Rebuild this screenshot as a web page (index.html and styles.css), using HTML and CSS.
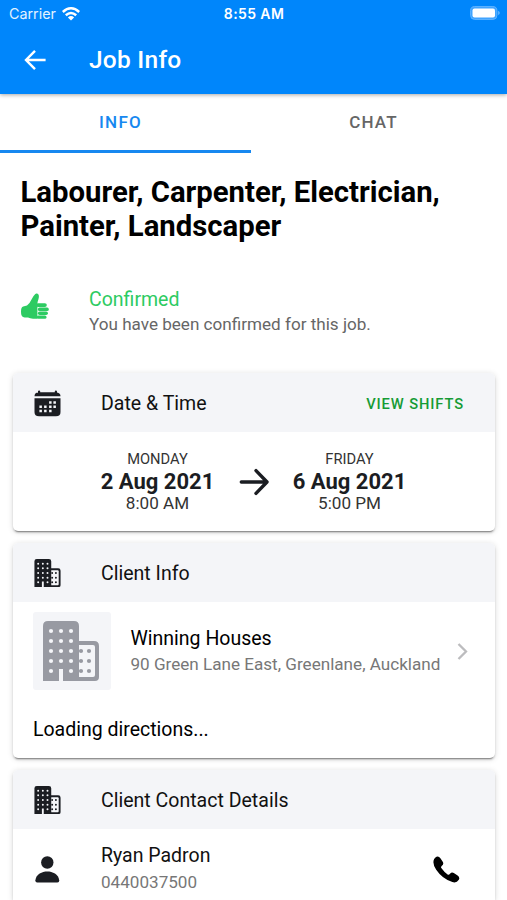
FILE: index.html
```html
<!DOCTYPE html>
<html lang="en">
<head>
<meta charset="utf-8">
<title>Job Info</title>
<link rel="stylesheet" href="styles.css">
</head>
<body>
<svg class="defs" aria-hidden="true">
  <defs>
    <symbol id="buildings" viewBox="0 0 56 60">
      <path fill="currentColor" d="M5 0H31Q36 0 36 5V20H51Q56 20 56 25V56Q56 60 52 60H20V48H16V60H0V5Q0 0 5 0Z"/>
      <path class="bg" d="M36 24H50Q52 24 52 26V54Q52 56 50 56H36Z"/>
      <g class="bg">
        <circle cx="8" cy="10" r="2.1"/><circle cx="18" cy="10" r="2.1"/><circle cx="28" cy="10" r="2.1"/>
        <circle cx="8" cy="20" r="2.1"/><circle cx="18" cy="20" r="2.1"/><circle cx="28" cy="20" r="2.1"/>
        <circle cx="8" cy="30" r="2.1"/><circle cx="18" cy="30" r="2.1"/><circle cx="28" cy="30" r="2.1"/>
        <circle cx="8" cy="40" r="2.1"/><circle cx="18" cy="40" r="2.1"/><circle cx="28" cy="40" r="2.1"/>
        <circle cx="8" cy="50" r="2.1"/><circle cx="28" cy="50" r="2.1"/>
      </g>
      <g fill="currentColor">
        <circle cx="38" cy="30" r="2.1"/><circle cx="46" cy="30" r="2.1"/>
        <circle cx="38" cy="40" r="2.1"/><circle cx="46" cy="40" r="2.1"/>
        <circle cx="38" cy="50" r="2.1"/><circle cx="46" cy="50" r="2.1"/>
      </g>
    </symbol>
  </defs>
</svg>

<header class="top">
  <div class="status">
    <div class="carrier"><span>Carrier</span>
      <svg width="18" height="14" viewBox="0 0 18 14" fill="none" stroke="#fff" stroke-width="2.5"><path d="M.8 5Q9 -2.4 17.2 5M3.8 8.3Q9 3.7 14.2 8.3"/><path d="M9 13.5L5.9 10.4Q9 7.8 12.1 10.4Z" fill="#fff" stroke="none"/></svg>
    </div>
    <div class="clock">8:55 AM</div>
    <svg class="battery" width="31" height="14" viewBox="0 0 31 14"><rect x=".6" y=".6" width="26.3" height="12.8" rx="4" fill="#3ea3ff" stroke="#62b4ff"/><rect x="2.5" y="2.6" width="22.5" height="8.8" rx="2" fill="#fff"/><path d="M28.3 4.8Q31 7 28.3 9.2Z" fill="#83c4ff"/></svg>
  </div>
  <div class="toolbar">
    <svg width="22" height="20" viewBox="0 0 22 20" fill="none" stroke="#fff" stroke-width="2.4"><path d="M11 .9L2 10L11 19.1M2 10H21.6"/></svg>
    <h1>Job Info</h1>
  </div>
</header>

<nav class="tabs">
  <div class="tab active"><span>INFO</span></div>
  <div class="tab"><span>CHAT</span></div>
</nav>

<main>
  <h2 class="title">Labourer, Carpenter, Electrician,<br>Painter, Landscaper</h2>

  <section class="confirm">
    <svg width="28" height="28" viewBox="0 0 28 28" fill="#2dcb62"><path d="M15.8 .6C18.4 1 18.2 4.4 17.3 6.8Q16.6 8.5 16.4 10.2V25.7H12Q9 25.2 7 24.4Q4.5 24.8 2 24Q0 23 0 18.5Q0 13.8 2.2 13.5L6 12.6Q9 10 10.8 6Q12.2 2.8 14.3 .9Q15 .4 15.8 .6Z"/><rect x="15" y="10.2" width="10.8" height="3.8" rx="1.9"/><rect x="16.9" y="14.6" width="10.9" height="3.5" rx="1.7"/><rect x="16.9" y="18.6" width="10" height="3.4" rx="1.7"/><rect x="15.8" y="22.5" width="9.7" height="3.3" rx="1.6"/></svg>
    <div>
      <div class="ok">Confirmed</div>
      <div class="note">You have been confirmed for this job.</div>
    </div>
  </section>

  <section class="card dates">
    <div class="card-head">
      <svg class="icon" width="27" height="27" viewBox="0 0 27 27" fill="#1b1d22"><path d="M4 3.2V1.4Q4 .5 5.1 .5T6.2 1.4V2.3H20.8V1.4Q20.8 .5 21.9 .5T23 1.4V2.5Q26.5 3 26.5 6.3H.5Q.5 2.8 4 2.5Z"/><path d="M.5 8.2H26.5V22Q26.5 26.3 22 26.3H5Q.5 26.3 .5 22Z"/><path class="head-dots" d="M15.1 11.3h2.5v2.5h-2.5zM19.4 11.3h2.5v2.5h-2.5zM5.4 15.5h2.5v2.5H5.4zM10.1 15.5h2.5v2.5h-2.5zM15.1 15.5h2.5v2.5h-2.5zM19.4 15.5h2.5v2.5h-2.5zM5.4 19.8h2.5v2.5H5.4zM10.1 19.8h2.5v2.5h-2.5zM15.1 19.8h2.5v2.5h-2.5z"/></svg>
      <h3>Date &amp; Time</h3>
      <span class="action">VIEW SHIFTS</span>
    </div>
    <div class="range">
      <div class="date"><span class="day">MONDAY</span><strong>2 Aug 2021</strong><span class="time">8:00 AM</span></div>
      <svg width="30" height="28" viewBox="0 0 30 28" fill="none" stroke="#1b1d22" stroke-width="3.4" stroke-linecap="round" stroke-linejoin="round"><path d="M17 2.6L28 14L17 25.4M27 14H2.3"/></svg>
      <div class="date"><span class="day">FRIDAY</span><strong>6 Aug 2021</strong><span class="time">5:00 PM</span></div>
    </div>
  </section>

  <section class="card client">
    <div class="card-head">
      <svg class="icon building" width="27" height="28"><use href="#buildings"/></svg>
      <h3>Client Info</h3>
    </div>
    <div class="client-row">
      <div class="thumb"><svg width="56" height="60"><use href="#buildings"/></svg></div>
      <div class="client-text">
        <div class="name">Winning Houses</div>
        <div class="address">90 Green Lane East, Greenlane, Auckland</div>
      </div>
      <svg class="chevron" width="11" height="17" viewBox="0 0 11 17" fill="none" stroke="#bcbcbe" stroke-width="2.3"><path d="M1.5 1L9 8.5L1.5 16"/></svg>
    </div>
    <p class="loading">Loading directions...</p>
  </section>

  <section class="card contact">
    <div class="card-head">
      <svg class="icon building" width="27" height="28"><use href="#buildings"/></svg>
      <h3>Client Contact Details</h3>
    </div>
    <div class="contact-row">
      <svg width="25" height="27" viewBox="0 0 25 27" fill="#1b1d22"><circle cx="12.3" cy="6.5" r="6.2"/><path d="M2.2 26.4Q.2 26.4 .4 24.2C1.2 18.2 7 15.6 12.3 15.6S23.4 18.2 24.2 24.2Q24.4 26.4 22.4 26.4Z"/></svg>
      <div class="contact-text">
        <div class="person">Ryan Padron</div>
        <div class="phone">0440037500</div>
      </div>
      <svg class="call" width="27" height="27" viewBox="0 0 27 27"><path d="M3.5 .7Q5.7 -.2 7.6 2.4L9.9 6Q11 8.2 8.9 9.7Q7.6 10.7 8.3 12.1Q11 16 14.6 18.4Q15.9 19.1 17 17.8Q18.6 15.8 20.8 17L24.6 19.6Q27.2 21.6 25.8 23.8Q23.6 27.3 19.4 26.1Q9.4 23 3.2 13.8Q.4 9.4 .4 6.2Q.4 2.6 3.5 .7Z"/></svg>
    </div>
  </section>
</main>
</body>
</html>
```

FILE: styles.css
```css
* { box-sizing: border-box; }
body { margin: 0; background: #fff; color: #000; font-family: Roboto, "Liberation Sans", sans-serif; }
h1, h2, h3, p { margin: 0; font-weight: 400; }
svg { display: block; flex: none; }
span, strong, h1, h3, .ok, .note, .name, .address, .person, .phone { white-space: nowrap; }
.defs { position: absolute; width: 0; height: 0; }

.top { position: relative; height: 94px; background: #0086fb; color: #fff; box-shadow: 0 1px 4px rgba(0,0,0,.35); }
.status { display: grid; grid-template-columns: 1fr auto 1fr; align-items: center; height: 27px; padding: 0 6px 0 9px; }
.carrier { display: flex; align-items: center; gap: 6px; font-family: Inter, sans-serif; font-size: 14.3px; color: #e3f2ff; }
.clock { padding-right: 2px; font-family: Inter, sans-serif; font-size: 14px; font-weight: 600; letter-spacing: .4px; }
.battery { justify-self: end; margin-top: -1px; }
.toolbar { display: flex; align-items: center; gap: 43px; height: 65px; padding-left: 24px; }
.toolbar h1 { font-size: 24.5px; font-weight: 500; letter-spacing: .25px; }

.tabs { display: flex; height: 58.5px; }
.tab { display: flex; align-items: center; justify-content: center; width: 251px; padding: 0 6px 0 0; border-bottom: 3px solid transparent; font-size: 17px; font-weight: 500; letter-spacing: 1.2px; color: #666; }
.tab.active { color: #1788f0; border-color: #1788f0; padding-right: 10px; }

.title { padding: 22px 20.5px 0; font-size: 29.3px; font-weight: 700; line-height: 34.3px; white-space: nowrap; }
.confirm { display: flex; gap: 40px; height: 130.4px; padding: 43.5px 0 0 21px; }
.confirm svg { margin-top: 6px; }
.ok { font-size: 19.5px; line-height: 25px; color: #2dcb62; }
.note { font-size: 17.1px; line-height: 25.5px; color: #666; }

.card { margin: 0 12px 12px 13px; background: #fff; border-radius: 5px; box-shadow: 0 3px 1px -2px rgba(0,0,0,.3), 0 2px 2px rgba(0,0,0,.16), 0 1px 6px rgba(0,0,0,.14); overflow: hidden; }
.card-head { display: flex; align-items: center; height: 59px; padding: 2px 31px 0 21px; background: #f4f5f8; color: #1b1d22; }
.card-head h3 { margin-left: 40px; font-size: 19.55px; color: #111; }
.icon { color: #1b1d22; }
.building { margin-top: -2px; }
.bg, .head-dots { fill: #f4f5f8; }
.action { margin-left: auto; font-size: 14.7px; font-weight: 500; letter-spacing: .9px; color: #169b35; }

.dates { height: 158px; }
.range { display: flex; align-items: center; gap: 24.5px; padding: 17px 0 0 88px; color: #1b1d22; }
.date { display: flex; flex-direction: column; align-items: center; width: 113px; }
.day { font-size: 14.7px; line-height: 20px; color: #333; }
.date strong { font-size: 22px; line-height: 25px; font-weight: 700; }
.time { margin-top: -1px; font-size: 17.1px; line-height: 20px; color: #333; }
.range svg { margin-top: 1px; }

.client { height: 215px; }
.client-row { display: flex; align-items: center; padding: 10px 27px 0 20px; }
.thumb { display: flex; align-items: center; justify-content: center; width: 78px; height: 78px; padding-right: 2px; background: #f4f5f8; border-radius: 3px; color: #989aa2; }
.client-text { margin-left: 19.5px; }
.name { font-size: 19.5px; line-height: 27px; }
.address { margin-top: -1px; padding-bottom: 1px; font-size: 17.1px; line-height: 26px; color: #777; }
.chevron { margin-left: auto; }
.loading { padding: 27px 0 0 20px; font-size: 19.5px; line-height: 25px; }

.contact { height: 130px; margin-bottom: 0; border-radius: 5px 5px 0 0; }
.contact-row { display: flex; align-items: center; padding: 14px 35.5px 0 22px; }
.contact-text { margin-left: 41px; }
.person { font-size: 19.5px; line-height: 26px; color: #111; }
.phone { font-size: 17.1px; line-height: 26px; color: #777; }
.call { margin-left: auto; }
```
